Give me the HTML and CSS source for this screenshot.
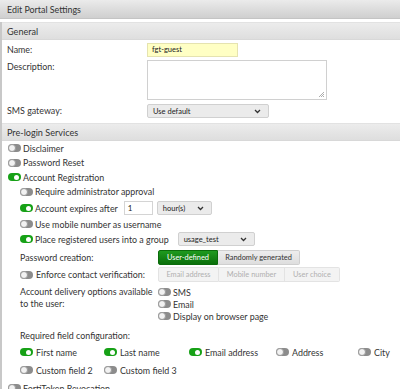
FILE: index.html
```html
<!DOCTYPE html>
<html>
<head>
<meta charset="utf-8">
<link rel="stylesheet" href="styles.css">
</head>
<body>
<div class="titlebar">Edit Portal Settings</div>
<div class="panel">
  <div class="sec-head">General</div>
  <div class="general">
    <div class="frow r-name">
      <div class="flabel">Name:</div>
      <div class="input name-in">fgt-guest</div>
    </div>
    <div class="frow r-desc">
      <div class="flabel">Description:</div>
      <div class="textarea">
        <svg class="grip" width="7" height="7" viewBox="0 0 7 7"><path d="M6 1L1 6M6 3L3 6M6 5L5 6" stroke="#999" stroke-width="0.8"/></svg>
      </div>
    </div>
    <div class="frow r-sms">
      <div class="flabel">SMS gateway:</div>
      <div class="select sel-sms"><span>Use default</span><svg class="chev" width="7" height="5" viewBox="0 0 7 5"><path d="M1 1l2.5 2.5L6 1" fill="none" stroke="#333" stroke-width="1.3"/></svg></div>
    </div>
  </div>
  <div class="sec-head">Pre-login Services</div>
  <div class="pre">
    <div class="trow l1"><span class="tog"></span>Disclaimer</div>
    <div class="trow l1"><span class="tog"></span>Password Reset</div>
    <div class="trow l1"><span class="tog on"></span>Account Registration</div>
    <div class="trow l2"><span class="tog"></span>Require administrator approval</div>
    <div class="trow l2 r-exp"><span class="tog on"></span>Account expires after
      <div class="input num-in">1</div>
      <div class="select sel-hour"><span>hour(s)</span><svg class="chev" width="7" height="5" viewBox="0 0 7 5"><path d="M1 1l2.5 2.5L6 1" fill="none" stroke="#333" stroke-width="1.3"/></svg></div>
    </div>
    <div class="trow l2 r-mob"><span class="tog"></span>Use mobile number as username</div>
    <div class="trow l2 r-grp"><span class="tog on"></span>Place registered users into a group
      <div class="select sel-grp"><span>usage_test</span><svg class="chev" width="7" height="5" viewBox="0 0 7 5"><path d="M1 1l2.5 2.5L6 1" fill="none" stroke="#333" stroke-width="1.3"/></svg></div>
    </div>
    <div class="crow r-pw">
      <div class="clabel">Password creation:</div>
      <div class="btngroup">
        <span class="btn active b-user">User-defined</span><span class="btn b-rand">Randomly generated</span>
      </div>
    </div>
    <div class="crow r-enf">
      <div class="clabel"><span class="tog"></span>Enforce contact verification:</div>
      <div class="btngroup disabled">
        <span class="btn b-email">Email address</span><span class="btn b-mob">Mobile number</span><span class="btn b-choice">User choice</span>
      </div>
    </div>
    <div class="crow r-del">
      <div class="clabel multi">Account delivery options available to the user:</div>
      <div class="opts">
        <div class="orow"><span class="tog"></span>SMS</div>
        <div class="orow"><span class="tog"></span>Email</div>
        <div class="orow"><span class="tog"></span>Display on browser page</div>
      </div>
    </div>
    <div class="req-label">Required field configuration:</div>
    <div class="req-grid">
      <div class="gitem"><span class="tog on"></span>First name</div>
      <div class="gitem"><span class="tog on"></span>Last name</div>
      <div class="gitem"><span class="tog on"></span>Email address</div>
      <div class="gitem"><span class="tog"></span>Address</div>
      <div class="gitem"><span class="tog"></span>City</div>
      <div class="gitem"><span class="tog"></span>Custom field 2</div>
      <div class="gitem"><span class="tog"></span>Custom field 3</div>
    </div>
    <div class="trow l1 r-ft"><span class="tog"></span>FortiToken Revocation</div>
  </div>
</div>
</body>
</html>
```
FILE: styles.css
```css
* { box-sizing: border-box; }
html, body {
  margin: 0;
  padding: 0;
  background: #fff;
  width: 400px;
  height: 389px;
  overflow: hidden;
}
body {
  font-family: Lato, "Open Sans", sans-serif;
  font-size: 8.9px;
  color: #333;
}
.titlebar {
  height: 19px;
  line-height: 19px;
  padding-left: 7px;
  background: linear-gradient(#ebebeb, #cfcfcf);
  border-bottom: 1px solid #c4c4c4;
  color: #333;
  font-size: 8.9px;
}
.panel {
  margin-top: 3px;
  border-left: 2px solid #c8c8c8;
}
.sec-head {
  height: 18px;
  line-height: 18px;
  padding-left: 5px;
  background: linear-gradient(#ececec, #dedede);
  border-top: 1px solid #e2e2e2;
  border-bottom: 1px solid #d8d8d8;
  font-size: 9.1px;
  color: #333;
}
.general {
  padding-left: 5px;
  height: 83px;
  padding-top: 3px;
}
.frow {
  display: flex;
  align-items: flex-start;
}
.flabel {
  width: 140px;
  flex: none;
  line-height: 14px;
}
.r-name { height: 17px; }
.r-desc { height: 44px; }
.r-sms { height: 18px; }
.input {
  height: 14px;
  border: 1px solid #d4d4d4;
  background: #fff;
  font-size: 7.5px;
  line-height: 12px;
  padding-left: 4px;
  color: #222;
}
.name-in {
  width: 91px;
  background: #ffffc4;
  border-color: #e5e3b0;
}
.textarea {
  width: 180px;
  height: 40px;
  border: 1px solid #d0d0d0;
  position: relative;
  background: #fff;
}
.grip { position: absolute; right: 1px; bottom: 1px; }
.select {
  height: 14px;
  border: 1px solid #d0d0d0;
  background: #ebebeb;
  border-radius: 2px;
  display: flex;
  align-items: center;
  justify-content: space-between;
  padding: 0 7px 0 5px;
  font-size: 7.5px;
  color: #222;
}
.sel-sms { width: 122px; }
.pre { padding-top: 0; }
.trow {
  display: flex;
  align-items: center;
  height: 14.5px;
  white-space: nowrap;
}
.l1 { padding-left: 6px; }
.l2 { padding-left: 18px; }
.tog {
  display: inline-block;
  position: relative;
  width: 13px;
  height: 8px;
  border-radius: 4px;
  background: #8c8c8c;
  margin-right: 2px;
  flex: none;
}
.tog::after {
  content: "";
  position: absolute;
  left: 0;
  top: 0;
  width: 8px;
  height: 8px;
  border-radius: 50%;
  background: #f2f2f2;
  border: 1px solid #9a9a9a;
  box-sizing: border-box;
}
.tog.on { background: #17a117; }
.tog.on::after {
  left: 6px;
  top: 1.5px;
  width: 5px;
  height: 5px;
  background: #fff;
  border: none;
}
.r-exp { height: 18px; margin-top: 0; }
.num-in {
  width: 29px;
  margin-left: 6px;
  font-size: 8px;
  padding-left: 3px;
}
.sel-hour { width: 55px; margin-left: 4px; }
.r-mob { height: 14px; }
.r-grp { height: 16px; }
.sel-grp { width: 77px; margin-left: 9px; }
.crow {
  display: flex;
  align-items: center;
  padding-left: 18px;
}
.clabel {
  width: 138px;
  flex: none;
  display: flex;
  align-items: center;
  white-space: nowrap;
}
.clabel .tog { margin-right: 3px; }
.r-pw { height: 18px; margin-top: 1px; }
.r-enf { height: 17px; }
.btngroup { display: flex; height: 15px; }
.btn {
  display: flex;
  align-items: center;
  justify-content: center;
  font-size: 7.4px;
  height: 15px;
  background: linear-gradient(#ededed, #dedede);
  border: 1px solid #cfcfcf;
  color: #333;
  white-space: nowrap;
}
.btn.active {
  background: linear-gradient(#1f9a1f, #0a6f0a);
  border-color: #0b6b0b;
  color: #fff;
  border-radius: 2px 0 0 2px;
}
.b-user { width: 60px; }
.b-rand { width: 82px; border-left: none; border-radius: 0 2px 2px 0; }
.disabled .btn {
  background: #f3f3f3;
  border-color: #e3e3e3;
  color: #b0b0b0;
}
.b-email { width: 61px; border-radius: 2px 0 0 2px; }
.b-mob { width: 66px; border-left: none; }
.b-choice { width: 55px; border-left: none; border-radius: 0 2px 2px 0; }
.r-del {
  align-items: flex-start;
  margin-top: 3px;
  height: 41px;
}
.multi {
  white-space: normal;
  line-height: 12px;
  width: 138px;
  padding-right: 2px;
  display: block;
}
.opts { display: flex; flex-direction: column; }
.orow {
  display: flex;
  align-items: center;
  height: 12px;
  white-space: nowrap;
}
.orow .tog { margin-right: 2px; }
.req-label {
  padding-left: 18px;
  height: 14px;
  line-height: 14px;
  margin-top: 2px;
}
.req-grid {
  display: grid;
  grid-template-columns: 84px 85px 87px 82px 60px;
  grid-auto-rows: 18px;
  padding-left: 18px;
}
.gitem {
  display: flex;
  align-items: center;
  white-space: nowrap;
}
.gitem .tog { margin-right: 3px; }
.r-ft { height: 18px; }
```
